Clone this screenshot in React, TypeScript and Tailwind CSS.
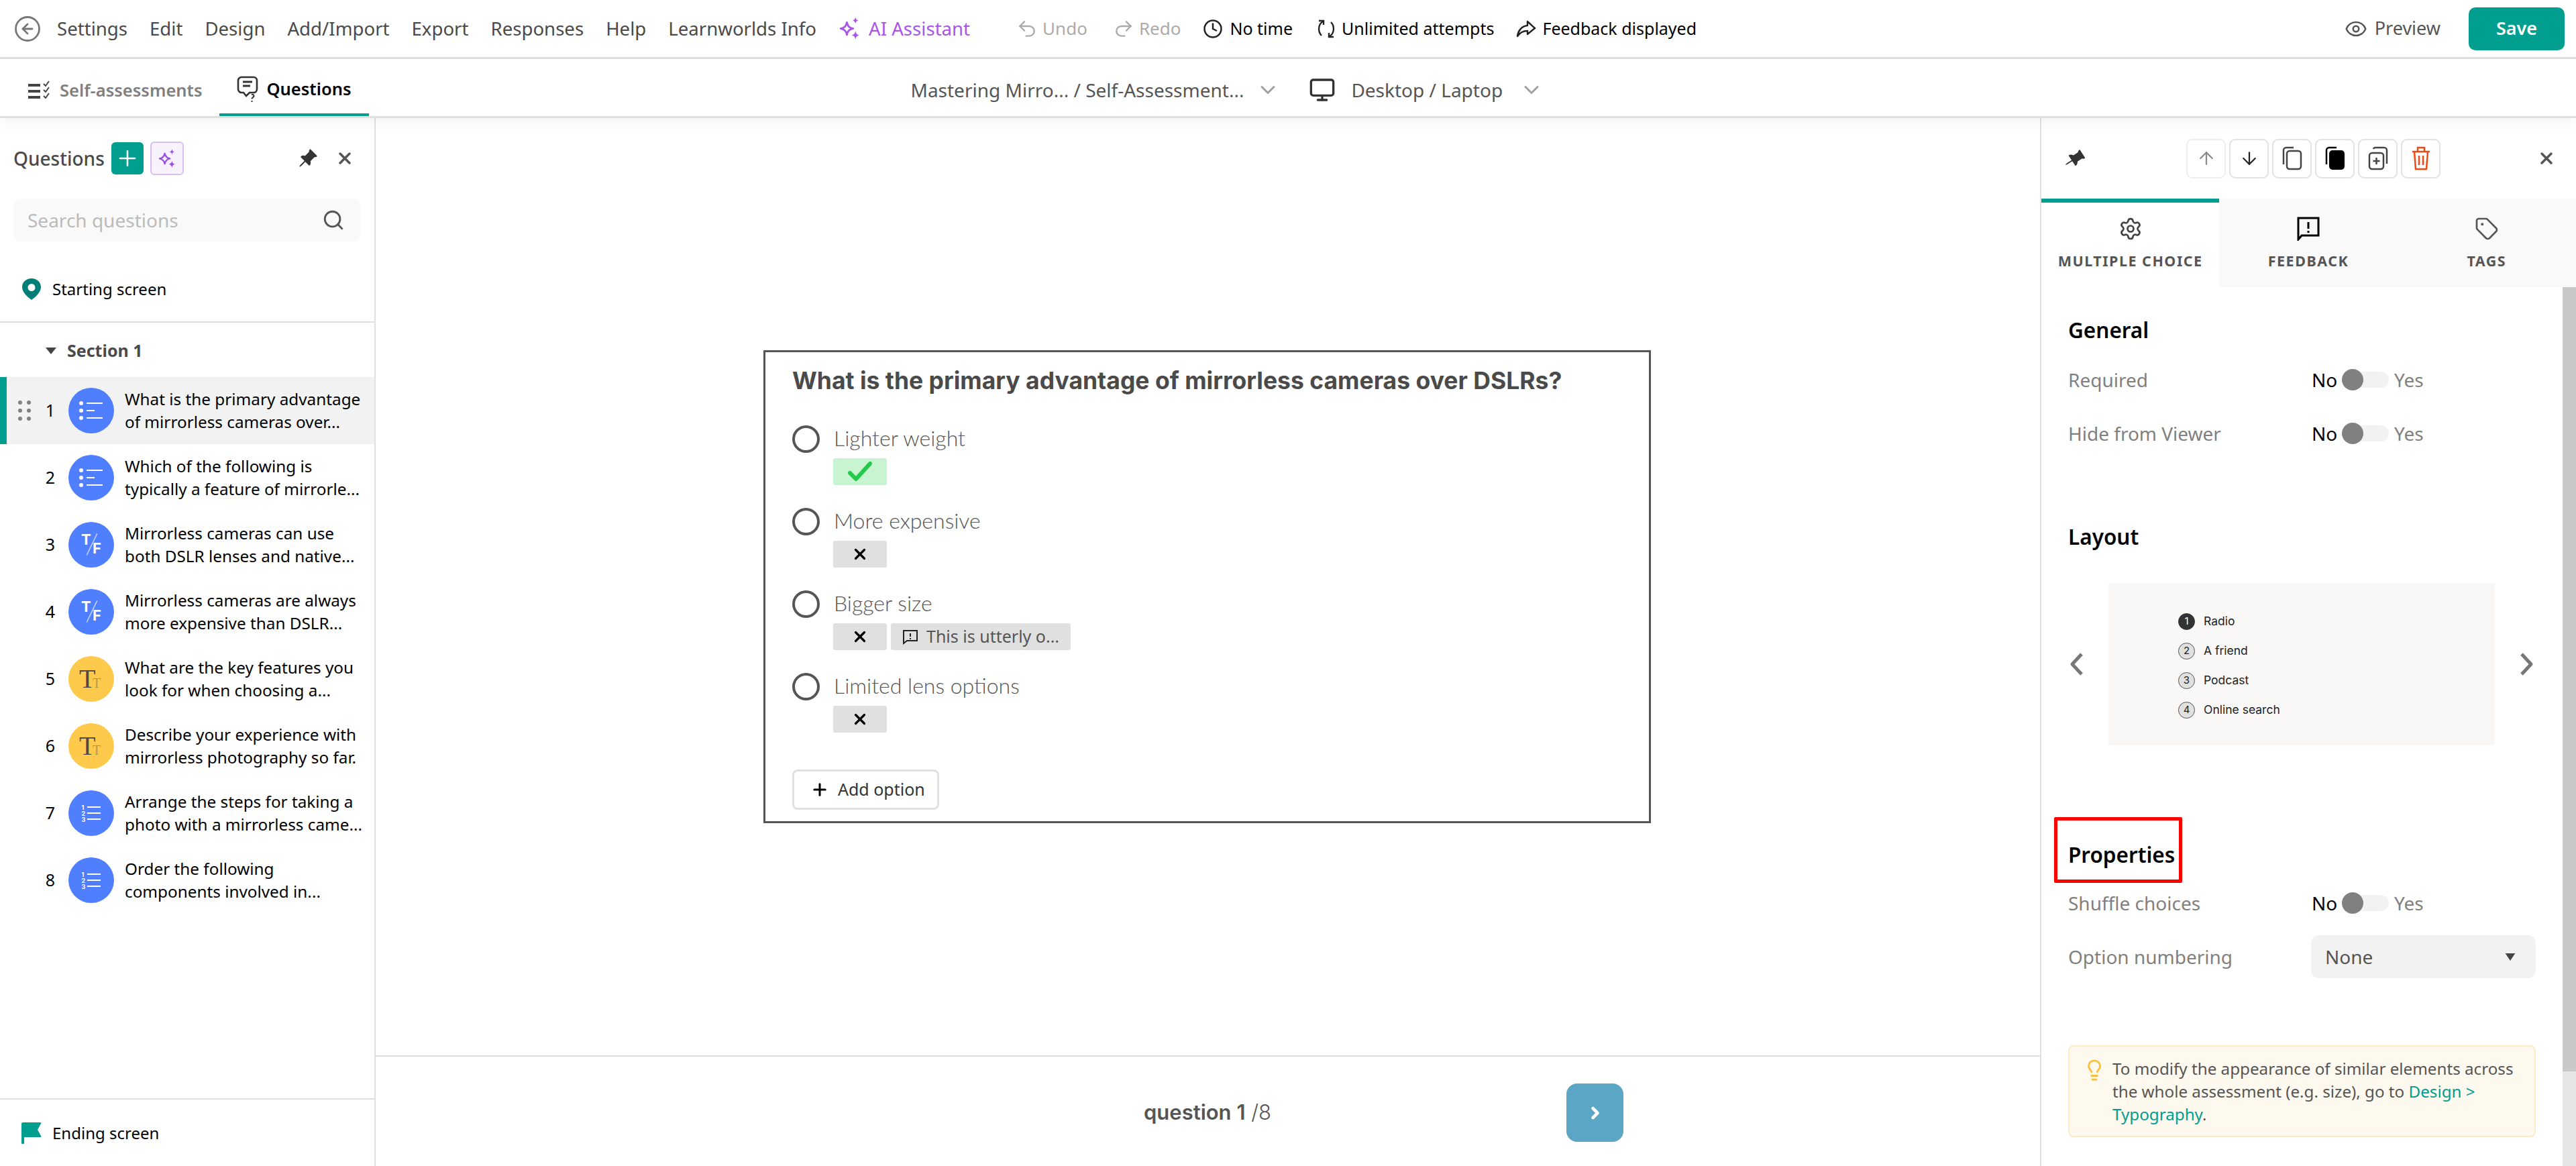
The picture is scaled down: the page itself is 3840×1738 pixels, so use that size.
import { ChevronDown, ChevronRight, CircleArrowLeft, Clock, Eye, Lightbulb, Monitor, Plus, Redo2, Search, Settings, Tag, Undo2, X, ArrowUp, ArrowDown } from 'lucide-react';
import { BsPinAngleFill } from 'react-icons/bs';

type Kind = 'list' | 'tf' | 'text' | 'order';

const menu = ['Settings', 'Edit', 'Design', 'Add/Import', 'Export', 'Responses', 'Help', 'Learnworlds Info'];

const questions: { kind: Kind; lines: [string, string] }[] = [
  { kind: 'list', lines: ['What is the primary advantage', 'of mirrorless cameras over...'] },
  { kind: 'list', lines: ['Which of the following is', 'typically a feature of mirrorle...'] },
  { kind: 'tf', lines: ['Mirrorless cameras can use', 'both DSLR lenses and native...'] },
  { kind: 'tf', lines: ['Mirrorless cameras are always', 'more expensive than DSLR...'] },
  { kind: 'text', lines: ['What are the key features you', 'look for when choosing a...'] },
  { kind: 'text', lines: ['Describe your experience with', 'mirrorless photography so far.'] },
  { kind: 'order', lines: ['Arrange the steps for taking a', 'photo with a mirrorless came...'] },
  { kind: 'order', lines: ['Order the following', 'components involved in...'] },
];

const options = [
  { label: 'Lighter weight', correct: true },
  { label: 'More expensive' },
  { label: 'Bigger size', feedback: 'This is utterly o...' },
  { label: 'Limited lens options' },
];

function Sparkles({ className }: { className?: string }) {
  return (
    <svg viewBox="2 2 27 31" className={className} fill="none">
      <path d="M12 10c1 5 3 7 8 8-5 1-7 3-8 8-1-5-3-7-8-8 5-1 7-3 8-8z" stroke="currentColor" strokeWidth="2.4" strokeLinejoin="round" />
      <path d="M23 3c.5 3 1.5 4 4 4.500-2.500.5-3.500 1.500-4 4.500-.5-3-1.500-4-4-4.500 2.500-.5 3.500-1.500 4-4.500z" fill="currentColor" />
      <path d="M23 21c.6 3.500 2 5 5 5.500-3 .5-4.400 2-5 5.500-.6-3.500-2-5-5-5.500 3-.5 4.400-2 5-5.500z" fill="currentColor" />
    </svg>
  );
}

function QuestionIcon({ kind }: { kind: Kind }) {
  if (kind === 'list') {
    return (
      <div className="flex h-[68px] w-[68px] shrink-0 items-center justify-center rounded-full bg-[#4f7fff]">
        <svg viewBox="0 0 36 28" className="w-[36px] h-[28px]" fill="white">
          <circle cx="3" cy="3" r="3" />
          <circle cx="3" cy="14" r="3" />
          <circle cx="3" cy="25" r="3" />
          <rect x="11" y="2" width="24" height="2" />
          <rect x="11" y="13" width="12" height="2" />
          <rect x="11" y="24" width="24" height="2" />
        </svg>
      </div>
    );
  }
  if (kind === 'tf') {
    return (
      <div className="relative h-[68px] w-[68px] shrink-0 rounded-full bg-[#4f7fff] font-['Inter',sans-serif] font-bold text-white">
        <span className="absolute left-[19px] top-[15px] text-[22px] leading-none">T</span>
        <svg viewBox="0 0 16 33" className="absolute left-[27px] top-[17px] h-[33px] w-[16px]">
          <path d="M16 0L0 33" stroke="#c6d5ff" strokeWidth="1.500" />
        </svg>
        <span className="absolute left-[36px] top-[28px] text-[22px] leading-none">F</span>
      </div>
    );
  }
  if (kind === 'text') {
    return (
      <div className="relative h-[68px] w-[68px] shrink-0 rounded-full bg-[#ffca4b] font-['Liberation_Serif',serif] text-[#4a4a4a]">
        <span className="absolute left-[16px] top-[14px] text-[40px] leading-none">T</span>
        <span className="absolute left-[36px] top-[30px] text-[20px] leading-none text-[#b49a50]">T</span>
      </div>
    );
  }
  return (
    <div className="flex h-[68px] w-[68px] shrink-0 items-center justify-center gap-[3px] rounded-full bg-[#4f7fff] text-white">
      <div className="flex flex-col font-['Inter',sans-serif] text-[9px] font-bold leading-[9px]">
        <span>1</span>
        <span>2</span>
        <span>3</span>
      </div>
      <div className="flex flex-col gap-[7px]">
        <div className="h-[2px] w-[20px] bg-white" />
        <div className="h-[2px] w-[20px] bg-white" />
        <div className="h-[2px] w-[20px] bg-white" />
      </div>
    </div>
  );
}

function Toggle({ label }: { label: string }) {
  return (
    <div className="flex h-[40px] items-center text-[28px]">
      <span className="w-[363px] text-[#808080]">{label}</span>
      <span className="w-[47px] text-black">No</span>
      <span className="relative h-[24px] w-[68px] rounded-full bg-[#f2f2f2]">
        <span className="absolute -left-[2px] -top-[4px] h-[32px] w-[32px] rounded-full bg-[#808080]" />
      </span>
      <span className="ml-[8px] text-[#808080]">Yes</span>
    </div>
  );
}

function ToolButton({ children, faint }: { children: React.ReactNode; faint?: boolean }) {
  return (
    <div className={`flex h-[59px] w-[59px] items-center justify-center rounded-[9px] border-2 ${faint ? 'border-[#eeeeee]' : 'border-[#e2e2e2]'}`}>
      {children}
    </div>
  );
}

function Sidebar() {
  return (
    <aside className="flex w-[560px] shrink-0 flex-col border-r-2 border-[#e0e0e0]">
      <div className="mt-[35px] flex h-[50px] items-center pl-[20px]">
        <span className="w-[146px] text-[28px] font-medium text-[#4a4a4a]">Questions</span>
        <div className="flex h-[48px] w-[48px] items-center justify-center rounded-[6px] bg-[#009e8e]">
          <Plus className="h-[38px] w-[38px] text-white" strokeWidth={1.6} />
        </div>
        <div className="ml-[10px] flex h-[50px] w-[50px] items-center justify-center rounded-[6px] border-2 border-[#d8bff5] bg-[#f7f2fe] text-[#9b51e0]">
          <Sparkles className="h-[30px] w-[28px]" />
        </div>
        <BsPinAngleFill className="ml-[170px] h-[30px] w-[30px] text-[#333333]" />
        <X className="ml-[26px] h-[28px] w-[28px] text-[#555555]" strokeWidth={3} />
      </div>
      <div className="ml-[20px] mt-[35px] flex h-[64px] w-[518px] items-center justify-between rounded-[12px] bg-[#f9f9f9] pl-[21px] pr-[24px]">
        <span className="text-[28px] text-[#bbbbbb]">Search questions</span>
        <Search className="h-[34px] w-[34px] text-[#555555]" strokeWidth={2} />
      </div>
      <div className="mt-[23px] flex h-[98px] items-center border-b-2 border-[#e0e0e0] pl-[33px]">
        <svg viewBox="0 0 28 32" className="h-[32px] w-[28px]">
          <path fillRule="evenodd" d="M14 0c8 0 14 5.500 14 13 0 7-7 14-14 19C7 27 0 20 0 13 0 5.500 6 0 14 0zm0 8a5.500 5.500 0 100 11 5.500 5.500 0 000-11z" fill="#007f78" />
        </svg>
        <span className="ml-[17px] text-[24px] text-black">Starting screen</span>
      </div>
      <div className="flex h-[81px] items-center pl-[68px] pt-[3px]">
        <svg viewBox="0 0 16 10" className="h-[10px] w-[16px]">
          <path d="M0 0h16L8 10z" fill="#444444" />
        </svg>
        <span className="ml-[16px] text-[25px] font-bold text-[#4a4a4a]">Section 1</span>
      </div>
      {questions.map((q, i) => (
        <div key={i} className={`relative flex h-[100px] items-center ${i === 0 ? 'bg-[#f2f2f2]' : ''}`}>
          {i === 0 && <div className="absolute inset-y-0 left-0 w-[10px] bg-[#009e8e]" />}
          <div className="flex w-[62px] justify-end">
            {i === 0 && (
              <div className="mr-[16px] grid grid-cols-2 gap-x-[7px] gap-y-[6px]">
                {[0, 1, 2, 3, 4, 5].map((d) => (
                  <span key={d} className="h-[6px] w-[6px] rounded-full bg-[#808080]" />
                ))}
              </div>
            )}
          </div>
          <span className="w-[26px] text-center text-[25px] text-black">{i + 1}</span>
          <div className="ml-[14px]">
            <QuestionIcon kind={q.kind} />
          </div>
          <div className="ml-[16px] whitespace-nowrap text-[24.3px] leading-[34px] text-black">
            <div>{q.lines[0]}</div>
            <div>{q.lines[1]}</div>
          </div>
        </div>
      ))}
      <div className="mt-auto flex h-[101px] items-center border-t-2 border-[#e0e0e0] pl-[32px]">
        <svg viewBox="0 0 30 32" className="h-[32px] w-[30px]">
          <path d="M0 2c0-1 1-2 2-2h26c1 0 2 1 1 2l-5 9 5 9c1 1 0 2-1 2H4v9c0 1-1 1-2 1H1c-1 0-1-1-1-1z" fill="#009e8e" />
        </svg>
        <span className="ml-[16px] text-[24px] text-black">Ending screen</span>
      </div>
    </aside>
  );
}

function Canvas() {
  return (
    <main className="flex min-w-0 flex-1 flex-col">
      <div className="flex flex-1 justify-center pr-[2px] pt-[346px]">
        <div className="h-[705px] w-[1323px] border-[3px] border-[#555555] pl-[40px] pt-[20px]">
          <h2 className="whitespace-nowrap font-['Inter',sans-serif] text-[35.5px] font-bold leading-[46px] text-[#4a4a4a]">
            What is the primary advantage of mirrorless cameras over DSLRs?
          </h2>
          <div className="mt-[43px] flex flex-col gap-[34px]">
            {options.map((o) => (
              <div key={o.label}>
                <div className="flex h-[41px] items-center">
                  <span className="h-[41px] w-[41px] rounded-full border-[4px] border-[#555555]" />
                  <span className="ml-[21px] pb-[3px] font-['Lato',sans-serif] text-[32px] font-light leading-[38px] text-[#555555]">{o.label}</span>
                </div>
                <div className="ml-[61px] mt-[8px] flex gap-[6px]">
                  {o.correct ? (
                    <div className="flex h-[40px] w-[80px] items-center justify-center rounded-[3px] bg-[#c9f4d2]">
                      <svg viewBox="0 0 36 30" className="h-[30px] w-[36px]" fill="none" stroke="#22c94a" strokeWidth="6" strokeLinecap="round" strokeLinejoin="round">
                        <path d="M3 17l9 9L33 3" />
                      </svg>
                    </div>
                  ) : (
                    <div className="flex h-[40px] w-[80px] items-center justify-center rounded-[3px] bg-[#e0e0e0]">
                      <X className="h-[26px] w-[26px] text-black" strokeWidth={3} />
                    </div>
                  )}
                  {o.feedback && (
                    <div className="flex h-[40px] w-[268px] items-center rounded-[3px] bg-[#e0e0e0] pl-[17px] text-[25px] text-[#555555]">
                      <svg viewBox="0 0 24 24" className="h-[24px] w-[24px]" fill="none" stroke="#222222" strokeWidth="2">
                        <path d="M2 3h20v15H7l-5 4z" />
                        <path d="M12 7v5M12 14v2" />
                      </svg>
                      <span className="ml-[12px]">{o.feedback}</span>
                    </div>
                  )}
                </div>
              </div>
            ))}
          </div>
          <div className="mt-[55px] flex h-[60px] w-[219px] items-center rounded-[8px] border-[3px] border-[#e0e0e0] pl-[24px] text-[25px] text-[#333333]">
            <Plus className="h-[28px] w-[28px] text-black" strokeWidth={2.6} />
            <span className="ml-[13px]">Add option</span>
          </div>
        </div>
      </div>
      <div className="flex h-[165px] items-center border-t-2 border-[#dddddd] pl-[1145px] pt-[4px]">
        <span className="w-[630px] font-['Inter',sans-serif] text-[31px] text-[#555555]">
          <span className="font-semibold">question 1</span> <span className="font-light">/8</span>
        </span>
        <div className="flex h-[87px] w-[85px] items-center justify-center rounded-[16px] bg-[#5ba5c5]">
          <ChevronRight className="h-[28px] w-[28px] text-white" strokeWidth={4} />
        </div>
      </div>
    </main>
  );
}

function PropertiesPanel() {
  return (
    <aside className="flex w-[799px] shrink-0 flex-col border-l-2 border-[#e0e0e0]">
      <div className="flex h-[120px] items-center pl-[36px]">
        <BsPinAngleFill className="h-[30px] w-[30px] rotate-12 text-[#333333]" />
        <div className="ml-[150px] flex gap-[5px]">
          <ToolButton faint>
            <ArrowUp className="h-[40px] w-[30px] text-[#8a8a8a]" strokeWidth={1.8} />
          </ToolButton>
          <ToolButton>
            <ArrowDown className="h-[40px] w-[30px] text-[#222222]" strokeWidth={1.8} />
          </ToolButton>
          <ToolButton>
            <svg viewBox="0 0 30 36" className="h-[36px] w-[30px]" fill="none" stroke="#444444" strokeWidth="2.500">
              <rect x="7" y="7" width="21" height="27" rx="4" />
              <path d="M2 27V6a4 4 0 014-4h11" />
            </svg>
          </ToolButton>
          <ToolButton>
            <svg viewBox="0 0 30 36" className="h-[36px] w-[30px]">
              <rect x="6" y="6" width="23" height="29" rx="5" fill="#000000" />
              <path d="M2 27V6a4 4 0 014-4h11" fill="none" stroke="#000000" strokeWidth="2.500" />
            </svg>
          </ToolButton>
          <ToolButton>
            <svg viewBox="0 0 30 36" className="h-[36px] w-[30px]" fill="none" stroke="#444444" strokeWidth="2.500">
              <rect x="2" y="10" width="21" height="24" rx="4" />
              <path d="M8 4a3 3 0 013-2h13a4 4 0 014 4v20" />
              <path d="M12.500 17v10M7.500 22h10" />
            </svg>
          </ToolButton>
          <ToolButton>
            <svg viewBox="0 0 28 36" className="h-[36px] w-[28px]" fill="none" stroke="#f04a12" strokeWidth="2.500">
              <path d="M1 8h26M9 8V2h10v6M4 8l2 26h16l2-26M11 14v14M17 14v14" />
            </svg>
          </ToolButton>
        </div>
        <X className="ml-[144px] h-[28px] w-[28px] text-[#555555]" strokeWidth={3} />
      </div>
      <div className="flex h-[132px]">
        <div className="flex w-[266px] flex-col items-center border-t-[6px] border-[#009e8e] pt-[21px]">
          <Settings className="h-[36px] w-[36px] text-[#444444]" strokeWidth={1.8} />
          <span className="mt-[14px] text-[21.5px] font-bold tracking-[1.5px] text-[#555555]">MULTIPLE CHOICE</span>
        </div>
        <div className="flex w-[266px] flex-col items-center bg-[#f9f9f9] pt-[27px]">
          <svg viewBox="0 0 34 36" className="h-[36px] w-[34px]" fill="none" stroke="#000000" strokeWidth="3">
            <path d="M2 2h30v26H7l-5 6z" />
            <path d="M17 8v10M17 21v3" />
          </svg>
          <span className="mt-[14px] text-[21.5px] font-bold tracking-[1.5px] text-[#555555]">FEEDBACK</span>
        </div>
        <div className="flex w-[267px] flex-col items-center bg-[#f9f9f9] pt-[27px]">
          <Tag className="h-[36px] w-[36px] text-[#555555]" strokeWidth={1.8} />
          <span className="mt-[14px] text-[21.5px] font-bold tracking-[1.5px] text-[#555555]">TAGS</span>
        </div>
      </div>
      <div className="flex min-h-0 flex-1">
        <div className="relative min-w-0 flex-1 pl-[40px] pr-[40px] pt-[42px]">
          <h3 className="text-[31.5px] font-semibold leading-[44px] text-black">General</h3>
          <div className="mt-[32px] flex flex-col gap-[40px]">
            <Toggle label="Required" />
            <Toggle label="Hide from Viewer" />
          </div>
          <h3 className="mt-[112px] text-[31.5px] font-semibold leading-[44px] text-black">Layout</h3>
          <div className="mt-[47px] flex items-center gap-[36px]">
            <svg viewBox="0 0 24 36" className="h-[36px] w-[24px]" fill="none" stroke="#777777" strokeWidth="5" strokeLinejoin="round">
              <path d="M20 3L6 18l14 15" />
            </svg>
            <div className="flex h-[242px] w-[576px] flex-col justify-center gap-[19px] bg-[#f9f8f7] pl-[104px] pt-[4px] font-['Inter',sans-serif] text-[17.5px] text-[#222222]">
              {['Radio', 'A friend', 'Podcast', 'Online search'].map((t, i) => (
                <div key={t} className="flex h-[25px] items-center gap-[13px]">
                  <span className={`flex h-[25px] w-[25px] items-center justify-center rounded-full border text-[15px] ${i === 0 ? 'border-[#333333] bg-[#333333] text-white' : 'border-[#555555] bg-[#e0e0e0]'}`}>
                    {i + 1}
                  </span>
                  {t}
                </div>
              ))}
            </div>
            <svg viewBox="0 0 24 36" className="h-[36px] w-[24px]" fill="none" stroke="#777777" strokeWidth="5" strokeLinejoin="round">
              <path d="M4 3l14 15L4 33" />
            </svg>
          </div>
          <h3 className="mt-[141px] text-[31.5px] font-semibold leading-[44px] text-black">Properties</h3>
          <div className="absolute left-[19px] top-[790px] h-[98px] w-[191px] rounded-[2px] border-[5px] border-[#ff0000]" />
          <div className="mt-[30px]">
            <Toggle label="Shuffle choices" />
          </div>
          <div className="mt-[28px] flex h-[64px] items-center text-[28px]">
            <span className="w-[362px] text-[#808080]">Option numbering</span>
            <div className="flex h-[64px] w-[335px] items-center justify-between rounded-[12px] bg-[#f2f2f2] pl-[21px] pr-[30px] text-[#555555]">
              None
              <svg viewBox="0 0 16 12" className="h-[11px] w-[16px]">
                <path d="M0 0h16L8 12z" fill="#444444" />
              </svg>
            </div>
          </div>
          <div className="mt-[100px] flex h-[137px] w-[697px] rounded-[8px] border-2 border-[#fde9c2] bg-[#fef9ee] pl-[20px] pr-[10px] pt-[16px]">
            <Lightbulb className="mt-[2px] h-[34px] w-[34px] shrink-0 text-[#fbbf3c]" strokeWidth={2} />
            <p className="ml-[10px] text-[24.2px] leading-[34px] text-[#555555]">
              To modify the appearance of similar elements across the whole assessment (e.g. size), go to{' '}
              <span className="text-[#009e8e]">Design &gt; Typography</span>.
            </p>
          </div>
        </div>
        <div className="w-[20px] shrink-0 bg-[#e6e6e6]">
          <div className="h-[1169px] bg-[#c8c8c8]" />
        </div>
      </div>
    </aside>
  );
}

export default function App() {
  return (
    <div className="flex h-[1738px] w-[3840px] flex-col overflow-hidden bg-white font-['Noto_Sans',sans-serif]">
      {/* Barra principal */}
      <header className="flex h-[88px] shrink-0 items-center border-b-[3px] border-[#e0e0e0] pl-[20px] pr-[17px]">
        <CircleArrowLeft className="h-[42px] w-[42px] text-[#777777]" strokeWidth={1.6} />
        <nav className="ml-[23px] flex gap-[33px] text-[27.6px] text-[#4a4a4a]">
          {menu.map((m) => (
            <span key={m}>{m}</span>
          ))}
        </nav>
        <div className="ml-[33px] flex items-center text-[27.6px] text-[#a855e8]">
          <Sparkles className="h-[36px] w-[33px]" />
          <span className="ml-[12px]">AI Assistant</span>
        </div>
        <div className="ml-[69px] flex items-center text-[26px] text-[#ababab]">
          <Undo2 className="h-[32px] w-[32px]" strokeWidth={1.8} />
          <span className="ml-[7px]">Undo</span>
          <Redo2 className="ml-[38px] h-[32px] w-[32px]" strokeWidth={1.8} />
          <span className="ml-[7px]">Redo</span>
        </div>
        <div className="ml-[33px] flex items-center text-[25px] text-black">
          <Clock className="h-[30px] w-[30px] text-[#222222]" strokeWidth={2} />
          <span className="ml-[10px]">No time</span>
          <svg viewBox="0 0 28 32" className="ml-[36px] h-[32px] w-[28px]" fill="none" stroke="#222222" strokeWidth="2.400">
            <path d="M9 5C2 9 1 20 7 26M19 27c7-4 8-15 2-21" />
            <path d="M3 4l7 0 0 6M25 28l-7 0 0-6" />
          </svg>
          <span className="ml-[9px]">Unlimited attempts</span>
          <svg viewBox="0 0 30 28" className="ml-[33px] h-[28px] w-[30px]" fill="none" stroke="#222222" strokeWidth="2.400" strokeLinejoin="round">
            <path d="M17 3l11 10-11 9v-5c-6 0-11 2-15 8 1-8 6-15 15-16z" />
          </svg>
          <span className="ml-[9px]">Feedback displayed</span>
        </div>
        <div className="ml-auto flex items-center text-[27px] text-[#555555]">
          <Eye className="h-[34px] w-[34px]" strokeWidth={1.8} />
          <span className="ml-[11px]">Preview</span>
        </div>
        <div className="ml-[42px] flex h-[64px] w-[143px] items-center justify-center rounded-[10px] bg-[#009e8e] text-[27px] font-semibold text-white">
          Save
        </div>
      </header>

      {/* Barra secundária */}
      <div className="relative z-10 flex h-[88px] shrink-0 items-center border-b-[3px] border-[#e0e0e0] shadow-[0_6px_20px_rgba(0,0,0,0.05)]">
        <div className="flex h-[85px] items-center pl-[42px] pt-[8px] text-[25.5px] font-semibold text-[#808080]">
          <svg viewBox="0 0 34 30" className="h-[30px] w-[34px]">
            <path d="M0 5h18v4H0zM0 14h18v4H0zM0 23h18v4H0z" fill="#444444" />
            <path d="M23 5l3 3 5-7M23 14l3 3 5-7M23 23l3 3 5-7" fill="none" stroke="#444444" strokeWidth="2" />
          </svg>
          <span className="ml-[13px]">Self-assessments</span>
        </div>
        <div className="ml-[25px] flex h-[85px] w-[223px] items-center justify-center border-b-[4px] border-[#009e8e] pt-[8px] text-[25.5px] font-semibold text-black">
          <svg viewBox="0 0 32 40" className="h-[40px] w-[32px]" fill="none" stroke="#333333" strokeWidth="2.600">
            <path d="M7 2h18a5 5 0 015 5v13a5 5 0 01-5 5h-6l-5 5-4-5H7a5 5 0 01-5-5V7a5 5 0 015-5z" />
            <path d="M9 9h14M9 15h11" strokeWidth="3.200" />
            <path d="M22 28c3-1 5 2 2 4-1 .7-1.500 1-1.500 2.500M22.500 37v2" strokeWidth="2" />
          </svg>
          <span className="ml-[13px]">Questions</span>
        </div>
        <div className="ml-[808px] flex items-center pt-[6px] text-[28px] text-[#555555]">
          <span>Mastering Mirro... / Self-Assessment...</span>
          <ChevronDown className="ml-[18px] h-[36px] w-[36px] text-[#a0a0a0]" strokeWidth={2} />
          <Monitor className="ml-[43px] h-[40px] w-[40px] text-[#333333]" strokeWidth={2} />
          <span className="ml-[23px]">Desktop / Laptop</span>
          <ChevronDown className="ml-[25px] h-[36px] w-[36px] text-[#a0a0a0]" strokeWidth={2} />
        </div>
      </div>

      <div className="flex min-h-0 flex-1">
        <Sidebar />
        <Canvas />
        <PropertiesPanel />
      </div>
    </div>
  );
}
